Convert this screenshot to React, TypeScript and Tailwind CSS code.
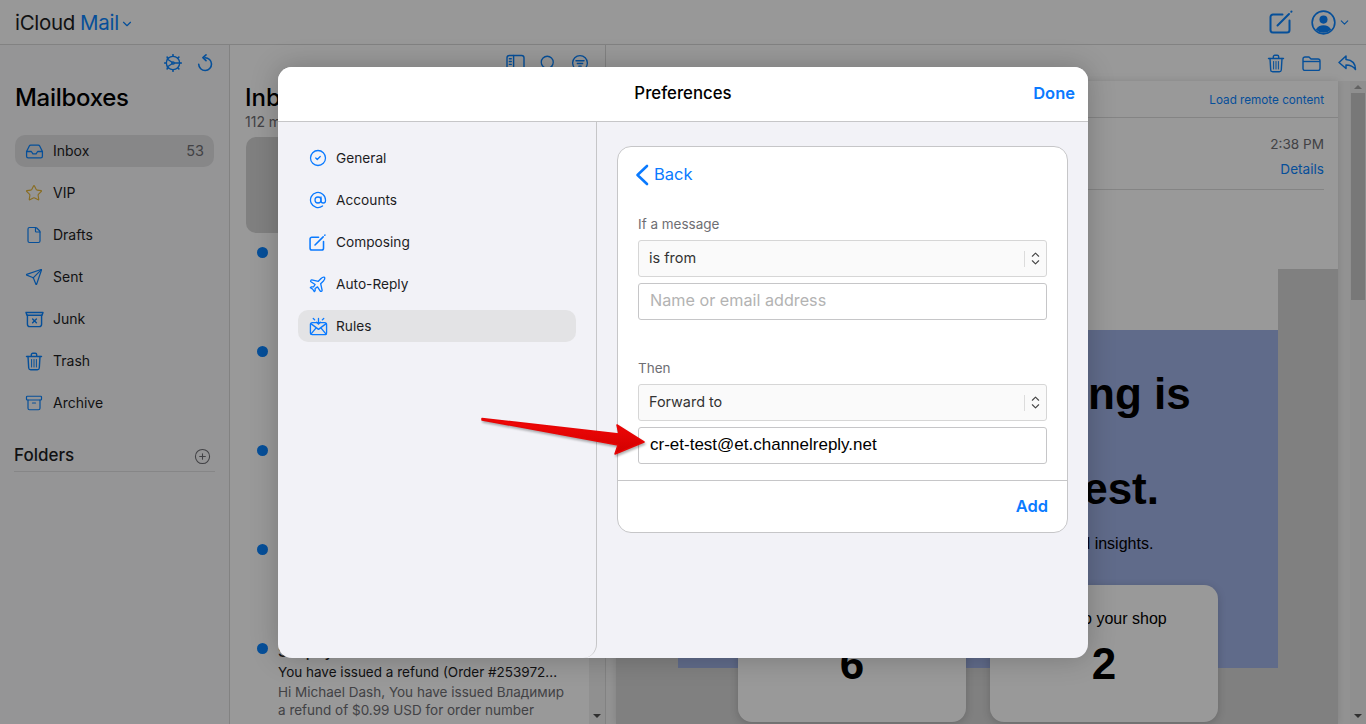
import {
  Archive,
  AtSign,
  ChevronDown,
  CircleCheck,
  CirclePlus,
  File,
  Inbox,
  Plane,
  Search,
  Send,
  Star,
} from "lucide-react";

const mailboxes = [
  { name: "Inbox", icon: <Inbox className="w-[19px] h-[19px] text-[#0a84ff]" strokeWidth={1.6} />, count: "53", active: true },
  { name: "VIP", icon: <Star className="w-[18px] h-[18px] text-[#e3b53a]" strokeWidth={1.5} /> },
  { name: "Drafts", icon: <File className="w-[18px] h-[18px] text-[#0a84ff]" strokeWidth={1.6} /> },
  { name: "Sent", icon: <Send className="w-[18px] h-[18px] text-[#0a84ff]" strokeWidth={1.6} /> },
  { name: "Junk", icon: <JunkIcon /> },
  { name: "Trash", icon: <TrashIcon className="w-[18px] h-[19px] text-[#0a84ff]" /> },
  { name: "Archive", icon: <Archive className="w-[18px] h-[18px] text-[#0a84ff]" strokeWidth={1.6} /> },
];

function JunkIcon() {
  return (
    <svg viewBox="0 0 20 18" className="w-[19px] h-[17px] text-[#0a84ff]" fill="none" stroke="currentColor" strokeWidth="1.5" strokeLinecap="round" strokeLinejoin="round">
      <path d="M1 1.5h18l-1 3H2z" />
      <path d="M2.5 4.5v9.5a2.5 2.5 0 0 0 2.5 2.5h10a2.5 2.5 0 0 0 2.5-2.5V4.5" />
      <path d="M8 8.5l4 4M12 8.5l-4 4" />
    </svg>
  );
}

function TrashIcon({ className }: { className: string }) {
  return (
    <svg viewBox="0 0 18 19" className={className} fill="none" stroke="currentColor" strokeWidth="1.4" strokeLinecap="round" strokeLinejoin="round">
      <path d="M1.5 4.5h15M6.3 4.5V2.8a1.5 1.5 0 0 1 1.5-1.5h2.4a1.5 1.5 0 0 1 1.5 1.5v1.7" />
      <path d="M3 4.5l.7 11.5a2 2 0 0 0 2 1.8h6.6a2 2 0 0 0 2-1.8L15 4.5" />
      <path d="M6.6 7.5v7.5M9 7.5v7.5M11.4 7.5v7.5" strokeWidth="1" />
    </svg>
  );
}

function GearIcon() {
  return (
    <svg viewBox="0 0 20 20" className="w-[18px] h-[18px] text-[#0a84ff]" fill="none" stroke="currentColor" strokeWidth="1.5" strokeLinecap="round">
      <circle cx="10" cy="10" r="7.4" />
      <circle cx="10" cy="10" r="1.3" />
      <path d="M3.5 5.5l5.4 3.7M3.5 14.5l5.4-3.7M11.4 10h6" />
      <path d="M10 .8v1.6M10 17.6v1.6M.8 10h1.6M17.6 10h1.6M3.5 3.5l1 1M15.5 15.5l1 1M16.5 3.5l-1 1M4.5 15.5l-1 1" strokeWidth="1.8" />
    </svg>
  );
}

function RefreshIcon() {
  return (
    <svg viewBox="0 0 16 18" className="w-[16px] h-[18px] text-[#0a84ff]" fill="none" stroke="currentColor" strokeWidth="1.6" strokeLinecap="round" strokeLinejoin="round">
      <path d="M8 3.7a6.4 6.4 0 1 1-6.3 6.6" />
      <path d="M9 .9L5.9 3.7 9 6.6" />
    </svg>
  );
}

function SidebarIcon() {
  return (
    <svg viewBox="0 0 20 18" className="w-[19px] h-[17px] text-[#0a84ff]" fill="none" stroke="currentColor" strokeWidth="1.5" strokeLinecap="round">
      <rect x="1" y="1.5" width="18" height="15" rx="2.5" />
      <path d="M8 1.5v15M3.5 5h2M3.5 8h2M3.5 11h2" />
    </svg>
  );
}

function FilterIcon() {
  return (
    <svg viewBox="0 0 20 20" className="w-[18px] h-[18px] text-[#0a84ff]" fill="none" stroke="currentColor" strokeWidth="1.5" strokeLinecap="round">
      <circle cx="10" cy="10" r="8.2" />
      <path d="M5.5 7.5h9M7 10.5h6M8.7 13.5h2.6" />
    </svg>
  );
}

function ComposeIcon({ className, width }: { className: string; width: string }) {
  return (
    <svg viewBox="0 0 24 24" className={className} fill="none" stroke="currentColor" strokeWidth={width} strokeLinecap="round" strokeLinejoin="round">
      <path d="M13.5 4.5H4A2.5 2.5 0 0 0 1.5 7v13A2.5 2.5 0 0 0 4 22.5h14a2.5 2.5 0 0 0 2.5-2.5V10.5" />
      <path d="M8.5 15.5L20 4M22.3 1.7l.2-.2" />
    </svg>
  );
}

function AvatarIcon() {
  return (
    <svg viewBox="0 0 26 26" className="w-[25px] h-[25px] text-[#0a84ff]" fill="none">
      <circle cx="13" cy="13" r="11.8" stroke="currentColor" strokeWidth="1.7" />
      <circle cx="13" cy="10" r="4.2" fill="currentColor" />
      <path d="M5 20.5c1.6-3.2 4.6-4.7 8-4.7s6.4 1.5 8 4.7a11.6 11.6 0 0 1-16 0z" fill="currentColor" />
    </svg>
  );
}

function FolderIcon() {
  return (
    <svg viewBox="0 0 19 15" className="w-[19px] h-[15px] text-[#0a84ff]" fill="none" stroke="currentColor" strokeWidth="1.4" strokeLinejoin="round">
      <path d="M1 3a2 2 0 0 1 2-2h4l2 2h7a2 2 0 0 1 2 2v7.5a2 2 0 0 1-2 2H3a2 2 0 0 1-2-2z" />
      <path d="M1 5.5h17" />
    </svg>
  );
}

function ReplyIcon() {
  return (
    <svg viewBox="0 0 19 16" className="w-[19px] h-[16px] text-[#0a84ff]" fill="none" stroke="currentColor" strokeWidth="1.5" strokeLinejoin="round">
      <path d="M8 1L1 7.5 8 13.5V10c4.200 0 7 1 9.500 4.500 0-6-3.500-9.500-9.500-10z" />
    </svg>
  );
}

function RulesIcon() {
  return (
    <svg viewBox="0 0 20 20" className="w-[19px] h-[19px] text-[#0a7aff]" fill="none" stroke="currentColor" strokeWidth="1.4" strokeLinecap="round" strokeLinejoin="round">
      <rect x="1.5" y="6" width="17" height="12.5" rx="2" />
      <path d="M2 7l8 6 8-6M2 18l5.500-6.500M18 18l-5.500-6.500" />
      <path d="M10 1.500v6M8 5.500l2 2 2-2M4.500 1.500l1.500 1.500M15.500 1.500L14 3" />
    </svg>
  );
}

function Stepper() {
  return (
    <div className="flex items-center h-[16px] pl-[6px] border-l border-[#dcdcdc] mr-[6px]">
      <svg viewBox="0 0 10 16" className="w-[9px] h-[15px] text-[#444]" fill="none" stroke="currentColor" strokeWidth="1.2" strokeLinecap="round" strokeLinejoin="round">
        <path d="M1.500 5.500L5 2l3.500 3.500M1.500 10.500L5 14l3.500-3.500" />
      </svg>
    </div>
  );
}

function NavRow({ icon, label, active }: { icon: React.ReactNode; label: string; active?: boolean }) {
  return (
    <div className={`flex items-center h-[32px] pl-[11px] rounded-[10px] text-[#1d1d1f] ${active ? "bg-[#e3e3e5]" : ""}`}>
      <span className="w-[27px] flex">{icon}</span>
      <span>{label}</span>
    </div>
  );
}

export default function App() {
  return (
    <div className="relative w-[1366px] h-[724px] overflow-hidden bg-white font-['Inter','Liberation_Sans',sans-serif] text-[#1d1d1f]">
      {/* Mail app underneath */}
      <header className="flex items-center justify-between h-[45px] pl-[15px] pr-[15px] bg-[#fdfdfd] border-b border-[#d9d9d9]">
        <div className="flex items-center pt-[2px] text-[20.5px] tracking-[-0.3px]">
          <span>iCloud</span>
          <span className="ml-[5px] text-[#0a84ff]">Mail</span>
          <ChevronDown className="w-[14px] h-[14px] ml-[1px] mt-[2px] text-[#0a84ff]" strokeWidth={2} />
        </div>
        <div className="flex items-center gap-[18px]">
          <ComposeIcon className="w-[24px] h-[24px] text-[#0a84ff]" width="2" />
          <div className="flex items-center gap-[2px]">
            <AvatarIcon />
            <ChevronDown className="w-[13px] h-[13px] text-[#0a84ff]" strokeWidth={2} />
          </div>
        </div>
      </header>

      <div className="flex h-[679px]">
        <aside className="w-[230px] shrink-0 bg-[#f9f9fb] border-r border-[#d9d9d9] px-[15px]">
          <div className="flex justify-end gap-[15px] pt-[9px] pr-[1px] h-[36px]">
            <GearIcon />
            <RefreshIcon />
          </div>
          <h1 className="mt-[1px] text-[24px] leading-[32px] font-medium tracking-[-0.3px] text-black">Mailboxes</h1>
          <nav className="mt-[21px] flex flex-col gap-[10px]">
            {mailboxes.map((box) => (
              <div
                key={box.name}
                className={`flex items-center h-[32px] pl-[10px] pr-[10px] rounded-[10px] text-[14px] ${box.active ? "bg-[#e1e1e3]" : ""}`}
              >
                <span className="w-[28px] flex">{box.icon}</span>
                <span className="pb-[1px]">{box.name}</span>
                {box.count && <span className="ml-auto pb-[1px] text-[#6e6e73] text-[14.5px]">{box.count}</span>}
              </div>
            ))}
          </nav>
          <div className="mt-[26px] flex items-center justify-between h-[27px] border-b border-[#e0e0e2] pb-[4px] mx-[-1px] pr-[4px]">
            <span className="text-[17px] font-medium">Folders</span>
            <CirclePlus className="w-[17px] h-[17px] text-[#6e6e73]" strokeWidth={1.5} />
          </div>
        </aside>

        <section className="relative w-[376px] shrink-0 border-r border-[#d9d9d9] bg-white overflow-hidden">
          <div className="flex justify-end gap-[14px] pt-[9px] pr-[16px] h-[36px]">
            <SidebarIcon />
            <Search className="w-[18px] h-[18px] text-[#0a84ff]" strokeWidth={1.7} />
            <FilterIcon />
          </div>
          <div className="pl-[15px]">
            <h2 className="mt-[1px] text-[24px] leading-[32px] font-medium text-black">Inbox</h2>
            <p className="-mt-[1px] text-[14px] leading-[17px] text-[#6e6e73]">112 messages, 53 unread</p>
          </div>
          <div className="mt-[7px] ml-[16px] mr-[34px] h-[96px] rounded-[10px] bg-[#d5d5d5]" />
          <div className="flex flex-col">
            {[0, 1, 2, 3].map((row) => (
              <div key={row} className="h-[99px] pl-[27px] pt-[14px]">
                <span className="block w-[11px] h-[11px] rounded-full bg-[#0a84ff]" />
              </div>
            ))}
            <div className="flex h-[99px] pl-[27px] pt-[14px]">
              <span className="w-[11px] h-[11px] rounded-full bg-[#0a84ff] shrink-0" />
              <div className="ml-[10px] w-[300px] -mt-[1px]">
                <div className="text-[15px] leading-[20px] font-medium">Shopify</div>
                <div className="text-[13.5px] leading-[19px] whitespace-nowrap mt-[1px]">You have issued a refund (Order #253972...</div>
                <div className="text-[13.5px] leading-[18px] mt-[1px] text-[#6e6e73]">
                  Hi Michael Dash, You have issued Владимир
                  <br />
                  a refund of $0.99 USD for order number
                </div>
              </div>
            </div>
          </div>
          <div className="absolute top-[36px] right-0 bottom-0 w-[16px] bg-[#f1f1f1] flex items-end justify-center pb-[6px]">
            <span className="w-0 h-0 border-x-[4px] border-x-transparent border-t-[4px] border-t-[#505050]" />
          </div>
        </section>

        <section className="relative flex-1 min-w-0 bg-[#f4f4f4]">
          <div className="flex justify-end items-center gap-[17px] h-[36px] pr-[9px] bg-white">
            <TrashIcon className="w-[18px] h-[19px] text-[#0a84ff]" />
            <FolderIcon />
            <ReplyIcon />
          </div>
          <div className="absolute left-[10px] top-[36px] right-[28px] bottom-0 shadow-[0_0_8px_rgba(0,0,0,0.12)] bg-white">
            <div className="h-[37px] flex items-center justify-end pr-[14px] pt-[3px] border-b border-[#dcdcdc] text-[11.7px] text-[#0a84ff]">
              Load remote content
            </div>
            <div className="mx-[14px] h-[72px] border-b border-[#dcdcdc] flex flex-col items-end pt-[16px] text-[13.6px]">
              <span className="text-[#6e6e73] leading-[20px]">2:38 PM</span>
              <span className="text-[#0a84ff] leading-[20px] mt-[5px]">Details</span>
            </div>
            <div className="mt-[79px] h-[600px] bg-[#d5d5d5] pl-[62px] pr-[60px]">
              <div className="h-[61px] bg-white" />
              <div className="h-[338px] bg-[#a0b2e6] font-['Liberation_Sans',sans-serif] text-center text-black pt-[40px]">
                <p className="text-[44px] leading-[48px] font-bold">Our list marketing is</p>
                <p className="text-[44px] leading-[48px] font-bold mt-[47px]">Here is my latest.</p>
                <p className="text-[16px] leading-[18px] mt-[22px]">Your weekly report with stats, trends and insights.</p>
              </div>
              <div className="relative -mt-[83px] flex justify-center gap-[24px] font-['Liberation_Sans',sans-serif] text-black">
                {[
                  { label: "Sent to your orders", value: "6" },
                  { label: "Sent to your shop", value: "2" },
                ].map((c) => (
                  <div key={c.label} className="w-[228px] h-[137px] rounded-[14px] bg-white shadow-[0_2px_8px_rgba(0,0,0,0.18)] text-center pt-[24px]">
                    <div className="text-[16px] leading-[20px]">{c.label}</div>
                    <div className="text-[44px] leading-[50px] font-bold mt-[10px]">{c.value}</div>
                  </div>
                ))}
              </div>
            </div>
          </div>
          <div className="absolute right-0 top-[36px] bottom-0 w-[16px] bg-[#efefef] flex flex-col items-center">
            <span className="mt-[4px] w-0 h-0 border-x-[4px] border-x-transparent border-b-[4px] border-b-[#a3a3a3]" />
            <div className="mt-[4px] w-[14px] h-[207px] bg-[#c8c8c8]" />
            <span className="mt-auto mb-[6px] w-0 h-0 border-x-[4px] border-x-transparent border-t-[4px] border-t-[#505050]" />
          </div>
        </section>
      </div>

      {/* Dimmed backdrop */}
      <div className="absolute inset-0 bg-black/40" />

      {/* Preferences dialog */}
      <div className="absolute left-[278px] top-[67px] w-[810px] h-[591px] rounded-[14px] bg-[#f2f2f7] shadow-[0_0_28px_rgba(0,0,0,0.22)] overflow-hidden flex flex-col">
        <div className="relative flex items-center justify-center h-[55px] shrink-0 bg-white border-b border-[#c6c6c8]">
          <span className="text-[16.8px] font-medium text-black">Preferences</span>
          <span className="absolute right-[13px] pb-[1px] text-[16.500px] font-semibold text-[#0a7aff]">Done</span>
        </div>
        <div className="flex flex-1 min-h-0">
          <nav className="w-[319px] shrink-0 border-r border-[#c6c6c8] rounded-br-[14px] px-[20px] pt-[20px] flex flex-col gap-[10px] text-[13.7px]">
            <NavRow icon={<CircleCheck className="w-[18px] h-[18px] text-[#0a7aff]" strokeWidth={1.7} />} label="General" />
            <NavRow icon={<AtSign className="w-[18px] h-[18px] text-[#0a7aff]" strokeWidth={1.7} />} label="Accounts" />
            <NavRow icon={<ComposeIcon className="w-[17px] h-[17px] text-[#0a7aff]" width="2.2" />} label="Composing" />
            <NavRow icon={<Plane className="w-[19px] h-[19px] -ml-[1px] text-[#0a7aff]" strokeWidth={1.7} />} label="Auto-Reply" />
            <NavRow icon={<RulesIcon />} label="Rules" active />
          </nav>
          <div className="flex-1 min-w-0 pl-[20px] pr-[20px] pt-[24px]">
            <div className="h-[387px] rounded-[14px] border border-[#c6c6c8] bg-white flex flex-col">
              <div className="flex items-center h-[54px] pl-[17px] pt-[1px] text-[16.500px] text-[#0a7aff]">
                <svg viewBox="0 0 14 22" className="w-[14px] h-[22px]" fill="none" stroke="currentColor" strokeWidth="2.6" strokeLinecap="round" strokeLinejoin="round">
                  <path d="M12 2L2.500 11 12 20" />
                </svg>
                <span className="ml-[5px]">Back</span>
              </div>
              <div className="px-[20px] flex-1">
                <label className="block mt-[15px] text-[13.500px] leading-[16px] text-[#6e6e73]">If a message</label>
                <div className="mt-[8px] flex items-center justify-between h-[37px] px-[10px] pr-0 rounded-[3px] border border-[#d6d6d6] bg-[#fafafa] text-[14.500px] text-[#333]">
                  <span className="pb-[1px]">is from</span>
                  <Stepper />
                </div>
                <div className="mt-[6px] flex items-center h-[37px] pl-[11px] pb-[2px] rounded-[3px] border border-[#c6c6c8] text-[16.200px] text-[#b3b3b3]">
                  Name or email address
                </div>
                <label className="block mt-[40px] text-[13.500px] leading-[16px] text-[#6e6e73]">Then</label>
                <div className="mt-[8px] flex items-center justify-between h-[37px] px-[10px] pr-0 rounded-[3px] border border-[#d6d6d6] bg-[#fafafa] text-[14.400px] text-[#333]">
                  <span className="pb-[1px]">Forward to</span>
                  <Stepper />
                </div>
                <div className="mt-[6px] flex items-center h-[37px] pl-[11px] pb-[1px] rounded-[3px] border border-[#c6c6c8] font-['Liberation_Sans',sans-serif] text-[17px] text-black">
                  cr-et-test@et.channelreply.net
                </div>
              </div>
              <div className="flex items-center justify-end h-[52px] pr-[19px] border-t border-[#c6c6c8] text-[16.500px] font-semibold text-[#0a7aff]">
                Add
              </div>
            </div>
          </div>
        </div>
      </div>

      {/* Annotation arrow */}
      <svg className="absolute left-[475px] top-[410px] w-[180px] h-[55px] drop-shadow-[1px_2px_1px_rgba(0,0,0,0.3)]" viewBox="0 0 180 55">
        <defs>
          <linearGradient id="arrowRed" x1="0" y1="0" x2="0" y2="1">
            <stop offset="0" stopColor="#f40808" />
            <stop offset="1" stopColor="#d00000" />
          </linearGradient>
        </defs>
        <polygon points="7,8.500 144,24 142,15 169,32 140,44 143,35 7,10" fill="url(#arrowRed)" stroke="#e60505" strokeWidth="1.5" strokeLinejoin="round" />
      </svg>
    </div>
  );
}
